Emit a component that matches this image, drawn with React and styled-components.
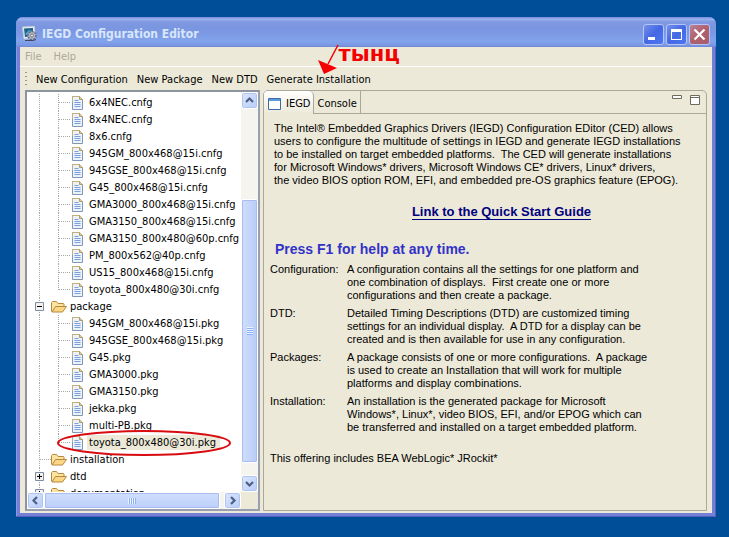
import React, { useState } from "react";
import styled, { createGlobalStyle, css } from "styled-components";

const GlobalStyle = createGlobalStyle`
  * {
    box-sizing: border-box;
  }
  body {
    margin: 0;
    background: #004e98;
    font-family: "DejaVu Sans Condensed", Tahoma, sans-serif;
    font-size: 11px;
    line-height: 13px;
    color: #000;
  }
  button {
    font: inherit;
    color: inherit;
    border: 0;
    padding: 0;
    background: none;
  }
`;

const configs = [
  "6x4NEC.cnfg",
  "8x4NEC.cnfg",
  "8x6.cnfg",
  "945GM_800x468@15i.cnfg",
  "945GSE_800x468@15i.cnfg",
  "G45_800x468@15i.cnfg",
  "GMA3000_800x468@15i.cnfg",
  "GMA3150_800x468@15i.cnfg",
  "GMA3150_800x480@60p.cnfg",
  "PM_800x562@40p.cnfg",
  "US15_800x468@15i.cnfg",
  "toyota_800x480@30i.cnfg",
];

const packages = [
  "945GM_800x468@15i.pkg",
  "945GSE_800x468@15i.pkg",
  "G45.pkg",
  "GMA3000.pkg",
  "GMA3150.pkg",
  "jekka.pkg",
  "multi-PB.pkg",
  "toyota_800x480@30i.pkg",
];

const intro = `The Intel® Embedded Graphics Drivers (IEGD) Configuration EDitor (CED) allows
users to configure the multitude of settings in IEGD and generate IEGD installations
to be installed on target embedded platforms.  The CED will generate installations
for Microsoft Windows* drivers, Microsoft Windows CE* drivers, Linux* drivers,
the video BIOS option ROM, EFI, and embedded pre-OS graphics feature (EPOG).`;

const terms = [
  {
    name: "Configuration:",
    text: `A configuration contains all the settings for one platform and
one combination of displays.  First create one or more
configurations and then create a package.`,
  },
  {
    name: "DTD:",
    text: `Detailed Timing Descriptions (DTD) are customized timing
settings for an individual display.  A DTD for a display can be
created and is then available for use in any configuration.`,
  },
  {
    name: "Packages:",
    text: `A package consists of one or more configurations.  A package
is used to create an Installation that will work for multiple
platforms and display combinations.`,
  },
  {
    name: "Installation:",
    text: `An installation is the generated package for Microsoft
Windows*, Linux*, video BIOS, EFI, and/or EPOG which can
be transferred and installed on a target embedded platform.`,
  },
];

const Desktop = styled.div`
  display: flex;
  height: 100vh;
  padding: 17px 13px 20px 16px;
  background: #004e98;
`;

const Window = styled.main`
  flex: 1;
  min-width: 0;
  display: flex;
  flex-direction: column;
  padding: 0 4px 4px;
  border-radius: 7px 7px 0 0;
  background: #7480d8;
  box-shadow: inset -1px -1px 0 #5560b8, inset 1px 0 0 #8d98e4;
`;

const TitleBar = styled.header`
  display: flex;
  align-items: center;
  gap: 4px;
  height: 30px;
  flex: none;
  margin: 0 -4px;
  padding: 4px 6px 0;
  border-radius: 7px 7px 0 0;
  background: linear-gradient(
    #7288d8 0,
    #98b2ee 2px,
    #8098e0 5px,
    #7b96e0 10px,
    #7c98e4 16px,
    #82a4ec 24px,
    #7c98e4 28px,
    #7088d4 30px
  );
`;

const Title = styled.h1`
  flex: 1;
  margin: 0;
  font: bold 12px/18px "DejaVu Sans Condensed", "Trebuchet MS", sans-serif;
  color: #d8e6fa;
`;

const WindowButtons = styled.div`
  display: flex;
  gap: 2px;
`;

const WindowButton = styled.button`
  width: 21px;
  height: 21px;
  border: 1px solid #b4c6f6;
  border-radius: 3px;
  background: ${({ $close }) =>
    $close
      ? "linear-gradient(135deg, #b88098, #b0606c 50%, #a85c70)"
      : "linear-gradient(135deg, #7490ec, #4468e4 50%, #4c78f0)"};
  svg {
    display: block;
  }
`;

const Client = styled.div`
  flex: 1;
  min-height: 0;
  display: flex;
  flex-direction: column;
  background: #ece9d8;
`;

const MenuBar = styled.nav`
  display: flex;
  gap: 12px;
  height: 20px;
  padding: 0 5px;
  border-bottom: 1px solid #fff;
  color: #aca899;
`;

const ToolBar = styled.div`
  display: flex;
  align-items: center;
  gap: 9px;
  height: 23px;
  padding: 1px 5px 0;
`;

const Grip = styled.span`
  width: 2px;
  height: 15px;
  background: repeating-linear-gradient(#9c998a 0 1px, transparent 1px 4px);
`;

const ToolButton = styled.button`
  position: relative;
  white-space: nowrap;
`;

const Callout = styled.span`
  position: absolute;
  left: 50px;
  bottom: 12px;
  display: flex;
  align-items: flex-start;
  color: #f40000;
  font: bold 21px/20px "DejaVu Sans", sans-serif;
  pointer-events: none;
`;

const Panes = styled.div`
  flex: 1;
  min-height: 0;
  display: grid;
  grid-template-columns: 235px minmax(0, 1fr);
  gap: 3px;
  padding: 0 5px 2px;
`;

const TreePane = styled.section`
  display: grid;
  grid-template: minmax(0, 1fr) 17px / minmax(0, 1fr) 17px;
  min-height: 0;
  border: 2px solid #8c94a0;
  border-right-color: #98a0b0;
  border-bottom-color: #98a0b0;
  background: #fff;
`;

const Tree = styled.ul`
  overflow: hidden;
  list-style: none;
  margin: 0;
  padding: 2px 0 0 8px;
`;

const dots = "#a8a8a8 0 1px, transparent 1px 2px";

const Row = styled.li`
  position: relative;
  display: flex;
  align-items: center;
  height: 17px;
  white-space: nowrap;
`;

const Guide = styled.span`
  width: ${({ $wide }) => ($wide ? "19px" : "16px")};
  height: 17px;
  flex: none;
  display: flex;
  align-items: center;
  background: ${({ $half }) =>
    css`repeating-linear-gradient(${dots}) 4px 0 / 1px ${$half ? "9px" : "17px"} no-repeat`};
  ${({ $branch }) =>
    $branch &&
    css`
      &::after {
        content: "";
        width: 11px;
        height: 1px;
        margin-left: 5px;
        background: repeating-linear-gradient(90deg, ${dots});
      }
    `}
`;

const Expander = styled.button`
  width: 9px;
  height: 9px;
  flex: none;
  background: #fff;
  svg {
    display: block;
  }
`;

const Label = styled.span`
  height: 15px;
  padding: 1px 2px;
  margin-left: ${({ $folder }) => ($folder ? "1px" : "3px")};
  ${({ $selected }) =>
    $selected &&
    css`
      background: #ece9d8;
      padding-right: 4px;
    `}
`;

const Ring = styled.svg`
  position: absolute;
  left: 20px;
  top: -5px;
`;

const ScrollBar = styled.div`
  display: flex;
  flex-direction: ${({ $horizontal }) => ($horizontal ? "row" : "column")};
  background: #f5f4ee;
`;

const ScrollButton = styled.button`
  width: 17px;
  height: 17px;
  flex: none;
  border: 1px solid #fff;
  border-radius: 3px;
  background: linear-gradient(135deg, #dce6fe, #b8ccf8);
  box-shadow: inset 0 0 0 1px #b0c4f0;
  svg {
    display: block;
  }
`;

const Track = styled.div`
  flex: 1;
  min-height: 0;
  display: flex;
  flex-direction: inherit;
`;

const Thumb = styled.div`
  flex: none;
  display: flex;
  align-items: center;
  justify-content: center;
  border: 1px solid #fff;
  border-radius: 2px;
  box-shadow: inset 0 0 0 1px #a8bcf0;
  ${({ $horizontal }) =>
    $horizontal
      ? css`
          width: 98%;
          background: linear-gradient(#d0dffe, #bccffa);
          &::after {
            content: "";
            width: 8px;
            height: 6px;
            background: repeating-linear-gradient(90deg, #eef4fe 0 1px, #8cb0f8 1px 2px);
          }
        `
      : css`
          height: 72%;
          margin: auto 0 12px;
          background: linear-gradient(90deg, #d0dffe, #b8ccf8);
          &::after {
            content: "";
            width: 6px;
            height: 8px;
            background: repeating-linear-gradient(#eef4fe 0 1px, #8cb0f8 1px 2px);
          }
        `}
`;

const Corner = styled.div`
  background: #ece9d8;
`;

const EditorPane = styled.section`
  display: flex;
  flex-direction: column;
  min-width: 0;
  border: 1px solid #aca899;
  border-radius: 5px 5px 0 0;
`;

const TabBar = styled.div`
  display: flex;
  height: 23px;
  flex: none;
`;

const Tab = styled.button`
  display: flex;
  align-items: center;
  gap: 5px;
  padding: 2px 3px 0 4px;
  border-right: 1px solid #aca899;
  ${({ $active }) =>
    $active
      ? css`
          background: linear-gradient(#fff, #ece9d8);
          border-radius: 4px 5px 0 0;
        `
      : css`
          padding-left: 3px;
          border-bottom: 1px solid #aca899;
        `}
`;

const TabActions = styled.div`
  flex: 1;
  display: flex;
  justify-content: flex-end;
  align-items: flex-start;
  gap: 8px;
  padding: 4px 6px 0;
  border-bottom: 1px solid #aca899;
  svg {
    display: block;
  }
`;

const Page = styled.article`
  padding: 8px 6px;
  overflow: hidden;
  font-family: "Liberation Sans", Arial, sans-serif;
`;

const Intro = styled.p`
  margin: 0 0 0 4px;
  white-space: pre;
`;

const GuideLink = styled.a`
  display: block;
  width: fit-content;
  margin: 17px auto 0;
  padding-left: 33px;
  font-weight: bold;
  font-size: 13px;
  line-height: 16px;
  color: #000080;
  text-decoration: none;
  span {
    border-bottom: 1px solid #000080;
  }
`;

const Hint = styled.h2`
  margin: 20px 0 0 5px;
  font-weight: bold;
  font-size: 14px;
  line-height: 18px;
  color: #3232c8;
`;

const Terms = styled.dl`
  display: grid;
  grid-template-columns: 77px minmax(0, 1fr);
  row-gap: 5px;
  margin: 5px 0 0;
  white-space: pre;
  dd {
    margin: 0;
  }
`;

const Footnote = styled.p`
  margin: 18px 0 0;
`;

const FileIcon = () => (
  <svg width="12" height="14" viewBox="0 0 12 14">
    <path d="M.5.5h7l3 3v10H.5z" fill="#eaf2fc" stroke="#8296b8" />
    <path d="M.5 6V.5h7" fill="none" stroke="#c4b078" />
    <path d="M7.5.5v3h3" fill="#e8cf8c" stroke="#b89c5c" />
    <path d="M2.5 4.5h4M2.5 6.5h6M2.5 8.5h6M2.5 10.5h6" stroke="#7f9fd8" />
  </svg>
);

const FolderIcon = () => (
  <svg width="16" height="14" viewBox="0 0 16 14">
    <path d="M.5 11.5v-9l1-1h4l1.5 2h5.5l.5.5v2.5" fill="#fbe3a0" stroke="#b8883c" />
    <path d="M1 12 4.5 6.5h11L11.5 12z" fill="#fbd684" stroke="#b8883c" strokeLinejoin="round" />
  </svg>
);

const AppIcon = () => (
  <svg width="16" height="16" viewBox="0 0 16 16">
    <path d="M.5 1 12.5.5l.5 11.5L2 13z" fill="#e8eef4" stroke="#c4ccd4" />
    <path d="M2 2.5 11 2v8L3 11z" fill="#1c6088" />
    <path d="M3 8 7 4l3 1-4 5z" fill="#4fa8c8" />
    <circle cx="10" cy="9.5" r="4" fill="#b4b8c4" stroke="#686c80" strokeDasharray="2 1" strokeWidth="1.5" />
    <circle cx="10" cy="9.5" r="1.5" fill="#e8ecf4" stroke="#70748c" />
    <path d="M3 14.5h8l3-1" stroke="#444860" fill="none" />
  </svg>
);

const arrows = {
  up: "M4 9l3.5-3.5L11 9",
  down: "M4 6l3.5 3.5L11 6",
  left: "M9 4 5.5 7.5 9 11",
  right: "M6 4l3.5 3.5L6 11",
};

const Arrow = ({ to }) => (
  <ScrollButton aria-label={`Scroll ${to}`}>
    <svg width="15" height="15" viewBox="0 0 15 15">
      <path d={arrows[to]} fill="none" stroke="#4d6185" strokeWidth="2.2" />
    </svg>
  </ScrollButton>
);

const IconSlot = styled.span`
  flex: none;
  display: flex;
  margin-left: ${({ $file }) => ($file ? "2px" : "0")};
`;

function FileRow({ name, last, selected, onSelect }) {
  return (
    <Row role="treeitem" aria-selected={selected} onClick={onSelect}>
      <Guide $wide />
      <Guide $branch $half={last} />
      <IconSlot $file>
        <FileIcon />
      </IconSlot>
      <Label $selected={selected}>{name}</Label>
      {selected && (
        <Ring width="178" height="28" viewBox="0 0 178 28" fill="none">
          <ellipse cx="89" cy="14" rx="86" ry="12" stroke="#d80c10" strokeWidth="2" />
        </Ring>
      )}
    </Row>
  );
}

function FolderRow({ name, open, onToggle }) {
  return (
    <Row role="treeitem" aria-expanded={open}>
      {open === undefined ? (
        <Guide $branch />
      ) : (
        <Guide>
          <Expander aria-label={`Toggle ${name}`} onClick={onToggle}>
            <svg width="9" height="9" viewBox="0 0 9 9">
              <path d="M.5.5h8v8h-8z" fill="#f4f2ea" stroke="#7c8ca4" />
              <path d={open ? "M2 4.5h5" : "M2 4.5h5M4.5 2v5"} stroke="#000" />
            </svg>
          </Expander>
        </Guide>
      )}
      <IconSlot>
        <FolderIcon />
      </IconSlot>
      <Label $folder>{name}</Label>
    </Row>
  );
}

function FileTree() {
  const [selected, setSelected] = useState("toyota_800x480@30i.pkg");
  const [open, setOpen] = useState(true);

  const renderFiles = (files) =>
    files.map((name, index) => (
      <FileRow
        key={name}
        name={name}
        last={index === files.length - 1}
        selected={name === selected}
        onSelect={() => setSelected(name)}
      />
    ));

  return (
    <TreePane>
      <Tree role="tree">
        {renderFiles(configs)}
        <FolderRow name="package" open={open} onToggle={() => setOpen(!open)} />
        {open && renderFiles(packages)}
        <FolderRow name="installation" />
        <FolderRow name="dtd" open={false} />
        <FolderRow name="documentation" open={false} />
      </Tree>
      <ScrollBar>
        <Arrow to="up" />
        <Track>
          <Thumb />
        </Track>
        <Arrow to="down" />
      </ScrollBar>
      <ScrollBar $horizontal>
        <Arrow to="left" />
        <Track>
          <Thumb $horizontal />
        </Track>
        <Arrow to="right" />
      </ScrollBar>
      <Corner />
    </TreePane>
  );
}

export default function App() {
  return (
    <Desktop>
      <GlobalStyle />
      <Window>
        <TitleBar>
          <AppIcon />
          <Title>IEGD Configuration Editor</Title>
          <WindowButtons>
            <WindowButton aria-label="Minimize">
              <svg width="19" height="19" viewBox="0 0 19 19">
                <path d="M4 12h7v3H4z" fill="#fff" />
              </svg>
            </WindowButton>
            <WindowButton aria-label="Maximize">
              <svg width="19" height="19" viewBox="0 0 19 19">
                <path d="M4 4h11v11H4zM5 7v7h9V7z" fill="#fff" fillRule="evenodd" />
              </svg>
            </WindowButton>
            <WindowButton aria-label="Close" $close>
              <svg width="19" height="19" viewBox="0 0 19 19">
                <path d="m4.5 4.5 10 10m0-10-10 10" stroke="#fff" strokeWidth="2.2" />
              </svg>
            </WindowButton>
          </WindowButtons>
        </TitleBar>
        <Client>
          <MenuBar>
            <button>File</button>
            <button>Help</button>
          </MenuBar>
          <ToolBar>
            <Grip />
            <ToolButton>New Configuration</ToolButton>
            <ToolButton>New Package</ToolButton>
            <ToolButton>New DTD</ToolButton>
            <ToolButton>
              Generate Installation
              <Callout>
                <svg width="22" height="30" viewBox="0 0 22 30">
                  <path d="M21 1 11 20" stroke="#f40000" strokeWidth="1.5" />
                  <path d="M1 16 20 24 7 30z" fill="#f40000" />
                </svg>
                тынц
              </Callout>
            </ToolButton>
          </ToolBar>
          <Panes>
            <FileTree />
            <EditorPane>
              <TabBar>
                <Tab $active>
                  <svg width="13" height="12" viewBox="0 0 13 12">
                    <path d="M.5.5h12v11H.5z" fill="#fff" stroke="#3c6ca8" />
                    <path d="M1 1h11v2H1z" fill="#5c98dc" />
                  </svg>
                  IEGD
                </Tab>
                <Tab>Console</Tab>
                <TabActions>
                  <button aria-label="Minimize pane">
                    <svg width="10" height="4" viewBox="0 0 10 4">
                      <path d="M.5.5h9v3h-9z" fill="#fff" stroke="#6c6a5c" />
                    </svg>
                  </button>
                  <button aria-label="Maximize pane">
                    <svg width="10" height="10" viewBox="0 0 10 10">
                      <path d="M.5.5h9v9h-9zM.5 2.5h9" fill="#fff" stroke="#6c6a5c" />
                    </svg>
                  </button>
                </TabActions>
              </TabBar>
              <Page>
                <Intro>{intro}</Intro>
                <GuideLink href="#guide">
                  <span>Link to the Quick Start Guide</span>
                </GuideLink>
                <Hint>Press F1 for help at any time.</Hint>
                <Terms>
                  {terms.map((term) => (
                    <React.Fragment key={term.name}>
                      <dt>{term.name}</dt>
                      <dd>{term.text}</dd>
                    </React.Fragment>
                  ))}
                </Terms>
                <Footnote>This offering includes BEA WebLogic* JRockit*</Footnote>
              </Page>
            </EditorPane>
          </Panes>
        </Client>
      </Window>
    </Desktop>
  );
}
